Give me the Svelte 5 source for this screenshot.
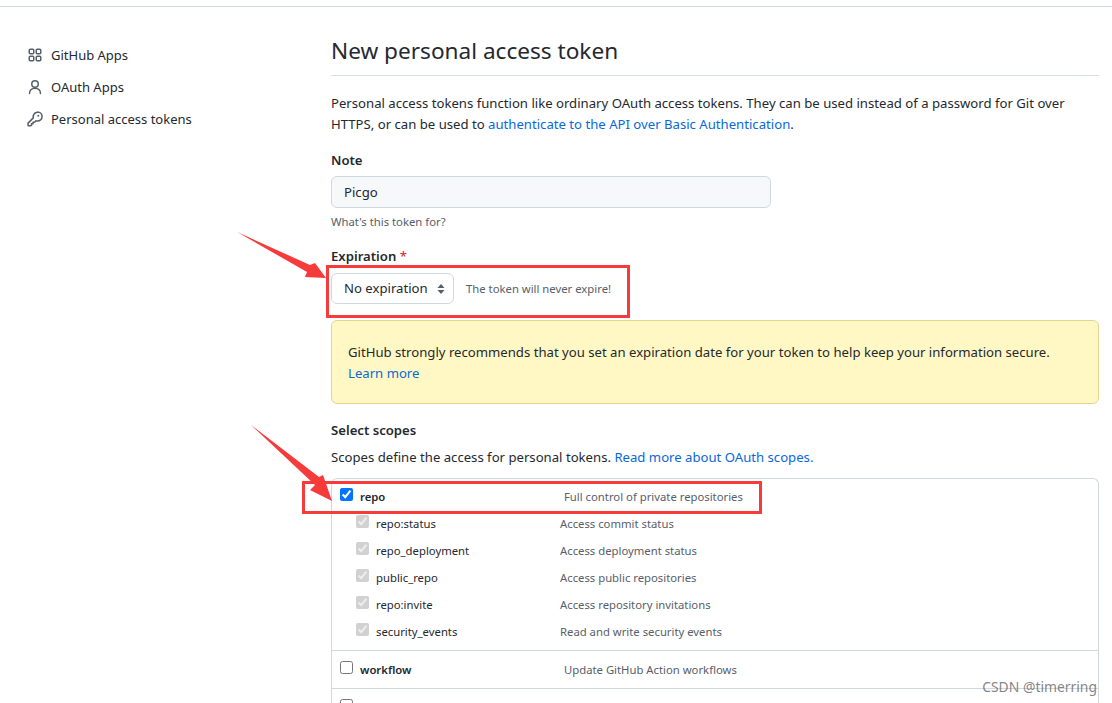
<script>
	const nav = [
		{ label: 'GitHub Apps', icon: 'apps' },
		{ label: 'OAuth Apps', icon: 'person' },
		{ label: 'Personal access tokens', icon: 'key' }
	];

	const repoScopes = [
		{ name: 'repo:status', desc: 'Access commit status' },
		{ name: 'repo_deployment', desc: 'Access deployment status' },
		{ name: 'public_repo', desc: 'Access public repositories' },
		{ name: 'repo:invite', desc: 'Access repository invitations' },
		{ name: 'security_events', desc: 'Read and write security events' }
	];
</script>

<div class="page">
	<div class="topbar"></div>
	<div class="layout">
		<nav class="sidebar">
			{#each nav as item}
				<a class="nav-item" href="#top">
					<svg width="16" height="16" viewBox="0 0 16 16" fill="none" stroke="#57606a" stroke-width="1.5">
						{#if item.icon === 'apps'}
							<rect x="2.25" y="2.25" width="4.5" height="4.5" rx="1" />
							<rect x="9.25" y="2.25" width="4.5" height="4.5" rx="1" />
							<rect x="2.25" y="9.25" width="4.5" height="4.5" rx="1" />
							<rect x="9.25" y="9.25" width="4.5" height="4.5" rx="1" />
						{:else if item.icon === 'person'}
							<circle cx="8" cy="5" r="3.25" />
							<path d="M2.5 14.5c0-3.2 2.3-5.3 5.5-5.3s5.5 2.100 5.500 5.300" stroke-linecap="round" />
						{:else}
							<path d="M10.500 .9a4.600 4.600 0 0 1 0 9.200c-.6 0-1.100-.1-1.600-.3L7.500 11.200H6v1.500H4.500v1.500l-.7.6H1.100v-2.700l5.200-5.200a4.600 4.600 0 0 1 4.200-5.700z" stroke-linejoin="round" />
							<circle cx="11.300" cy="4.700" r="1" fill="#57606a" stroke="none" />
						{/if}
					</svg>
					<span>{item.label}</span>
				</a>
			{/each}
		</nav>

		<main class="content">
			<h1>New personal access token</h1>
			<p class="intro">
				Personal access tokens function like ordinary OAuth access tokens. They can be used instead of a password for Git over HTTPS, or can be used to
				<a href="#top">authenticate to the API over Basic Authentication</a>.
			</p>

			<label class="field-label" for="note">Note</label>
			<input id="note" class="note-input" type="text" value="Picgo" />
			<p class="note-hint">What's this token for?</p>

			<div class="field-label expiration">Expiration <span class="required">*</span></div>
			<div class="expiry-row">
				<div class="select">
					<span>No expiration</span>
					<svg width="10" height="16" viewBox="0 0 10 16" fill="#57606a">
						<path d="M5 3 8.500 7h-7zM5 13 1.500 9h7z" />
					</svg>
				</div>
				<span class="expiry-note">The token will never expire!</span>
			</div>

			<div class="flash">
				GitHub strongly recommends that you set an expiration date for your token to help keep your information secure.
				<a class="learn" href="#top">Learn more</a>
			</div>

			<div class="field-label scopes-title">Select scopes</div>
			<p class="scopes-intro">
				Scopes define the access for personal tokens. <a href="#top">Read more about OAuth scopes.</a>
			</p>

			<div class="scopes">
				<section class="scope-group">
					<div class="scope-row">
						<input type="checkbox" checked />
						<b>repo</b>
						<span>Full control of private repositories</span>
					</div>
					{#each repoScopes as scope}
						<div class="scope-row sub">
							<input type="checkbox" checked disabled />
							<em>{scope.name}</em>
							<span>{scope.desc}</span>
						</div>
					{/each}
				</section>
				<section class="scope-group">
					<div class="scope-row">
						<input type="checkbox" />
						<b>workflow</b>
						<span>Update GitHub Action workflows</span>
					</div>
				</section>
				<section class="scope-group">
					<div class="scope-row">
						<input type="checkbox" />
					</div>
				</section>
			</div>
		</main>
	</div>

	<div class="annotation box-expiry"></div>
	<div class="annotation box-repo"></div>
	<svg class="arrows" width="1112" height="703" viewBox="0 0 1112 703" fill="#f73a3a">
		<polygon points="237,232 310,265 315,263 326,278 305,277 307,272" />
		<polygon points="251,425 319,477 323,475 332,501 310,490 315,485" />
	</svg>
	<div class="watermark">CSDN @timerring</div>
</div>

<style>
	:global(body) {
		margin: 0;
		background: #fff;
	}

	.page {
		position: relative;
		width: 1112px;
		height: 703px;
		overflow: hidden;
		font-family: 'Noto Sans', 'Open Sans', sans-serif;
		font-size: 13.15px;
		line-height: 21px;
		color: #24292f;
	}

	.topbar {
		height: 6px;
		border-bottom: 1px solid #d0d7de;
	}

	.layout {
		display: flex;
		padding-left: 27px;
	}

	.sidebar {
		width: 304px;
		padding-top: 32px;
		flex-shrink: 0;
		font-size: 13px;
	}

	.nav-item {
		display: flex;
		align-items: center;
		gap: 8px;
		height: 32px;
		color: #24292f;
		text-decoration: none;
	}

	.content {
		width: 768px;
	}

	h1 {
		margin: 0;
		padding: 27px 0 7px;
		font-size: 22.6px;
		font-weight: 400;
		line-height: 34px;
		border-bottom: 1px solid #d8dee4;
	}

	a {
		color: #0969da;
		text-decoration: none;
	}

	.intro {
		margin: 17px 0 0;
	}

	.field-label {
		display: block;
		margin-top: 15px;
		font-weight: 600;
	}

	.note-input {
		display: block;
		box-sizing: border-box;
		width: 440px;
		height: 32px;
		margin-top: 5px;
		padding: 0 12px;
		border: 1px solid #d0d7de;
		border-radius: 6px;
		background: #f6f8fa;
		color: #24292f;
		font: inherit;
	}

	.note-hint {
		margin: 4px 0 0;
		font-size: 11.3px;
		line-height: 20px;
		color: #57606a;
	}

	.expiration {
		margin-top: 14px;
	}

	.required {
		font-weight: 400;
		color: #cf222e;
	}

	.expiry-row {
		display: flex;
		align-items: center;
		gap: 12px;
		margin-top: 6px;
	}

	.select {
		display: flex;
		align-items: center;
		justify-content: space-between;
		box-sizing: border-box;
		width: 123px;
		height: 31px;
		padding: 0 7px 0 12px;
		border: 1px solid #d0d7de;
		border-radius: 6px;
	}

	.expiry-note {
		font-size: 11.3px;
		color: #57606a;
	}

	.flash {
		box-sizing: border-box;
		height: 84px;
		margin-top: 16px;
		padding: 21px 16px;
		border: 1px solid #e6d58f;
		border-radius: 6px;
		background: #fff8c5;
	}

	.learn {
		display: block;
	}

	.scopes-title {
		margin-top: 16px;
	}

	.scopes-intro {
		margin: 6px 0 0;
	}

	.scopes {
		margin-top: 10px;
		border: 1px solid #d0d7de;
		border-bottom: 0;
		border-radius: 6px 6px 0 0;
	}

	.scope-group {
		padding: 3px 0 4px;
		border-bottom: 1px solid #d0d7de;
	}

	.scope-group:first-child {
		padding-bottom: 5px;
	}

	.scope-group:last-child {
		border-bottom: 0;
	}

	.scope-row {
		display: grid;
		grid-template-columns: 13px 197px 1fr;
		column-gap: 7px;
		align-items: center;
		height: 30px;
		padding-left: 8px;
		font-size: 11.3px;
	}

	.scope-group:first-child .scope-row:first-child {
		height: 28px;
	}

	.scope-row input {
		width: 13px;
		height: 13px;
		margin: -4px 0 0;
		accent-color: #0075ff;
	}

	.scope-row b {
		font-weight: 600;
		color: #24292f;
	}

	.scope-row span {
		color: #57606a;
	}

	.sub {
		height: 27px;
		padding-left: 24px;
		grid-template-columns: 13px 177px 1fr;
	}

	.sub em {
		font-style: normal;
		color: #24292f;
	}

	.annotation {
		position: absolute;
		box-sizing: border-box;
		border: 3px solid #f73a3a;
	}

	.box-expiry {
		left: 326px;
		top: 265px;
		width: 304px;
		height: 53px;
	}

	.box-repo {
		left: 302px;
		top: 481px;
		width: 460px;
		height: 33px;
	}

	.arrows {
		position: absolute;
		left: 0;
		top: 0;
		pointer-events: none;
	}

	.watermark {
		position: absolute;
		right: 15px;
		top: 676px;
		font-size: 13.9px;
		color: rgba(90, 90, 90, 0.75);
	}
</style>
